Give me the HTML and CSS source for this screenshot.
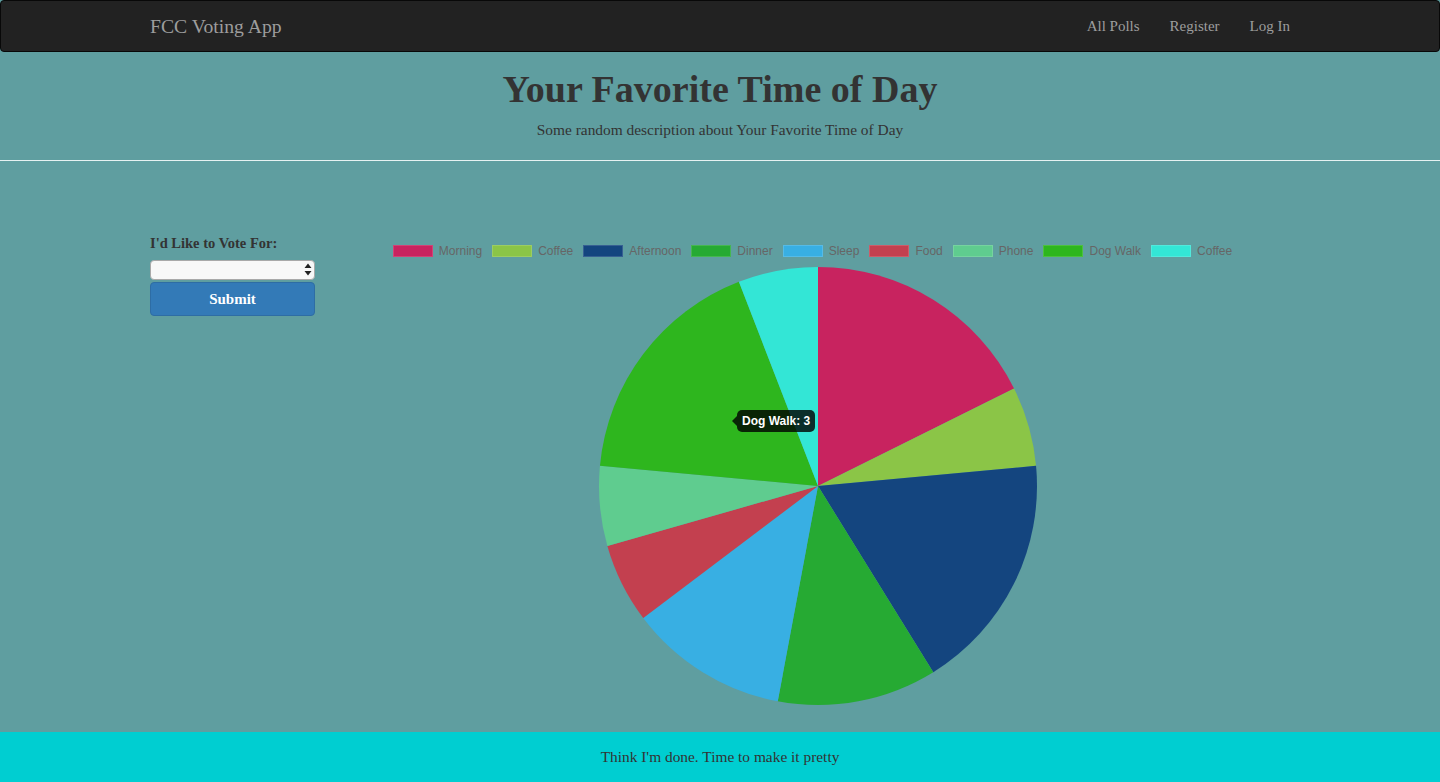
FILE: index.html
```html
<!DOCTYPE html>
<html lang="en">
<head>
<meta charset="utf-8">
<title>FCC Voting App</title>
<link rel="stylesheet" href="styles.css">
</head>
<body>
<nav class="navbar">
  <div class="container nav-inner">
    <a class="brand" href="#">FCC Voting App</a>
    <ul class="nav-links">
      <li><a href="#">All Polls</a></li>
      <li><a href="#">Register</a></li>
      <li><a href="#">Log In</a></li>
    </ul>
  </div>
</nav>

<header class="poll-header">
  <h1 class="poll-title">Your Favorite Time of Day</h1>
  <p class="poll-desc">Some random description about Your Favorite Time of Day</p>
</header>
<hr class="divider">

<main class="container main">
  <section class="vote-col">
    <label class="vote-label" for="vote">I'd Like to Vote For:</label>
    <div class="select-wrap">
      <select id="vote" class="vote-select">
        <option></option>
      </select>
      <span class="select-arrows">
        <svg width="8" height="13" viewBox="0 0 8 13"><path d="M4 0.5 L7.5 5 H0.5 Z M4 12.5 L7.5 8 H0.5 Z" fill="#222"/></svg>
      </span>
    </div>
    <button class="submit-btn" type="button">Submit</button>
  </section>

  <section class="chart-col">
    <ul class="legend">
      <li><span class="swatch sw-morning"></span>Morning</li>
      <li><span class="swatch sw-coffee"></span>Coffee</li>
      <li><span class="swatch sw-afternoon"></span>Afternoon</li>
      <li><span class="swatch sw-dinner"></span>Dinner</li>
      <li><span class="swatch sw-sleep"></span>Sleep</li>
      <li><span class="swatch sw-food"></span>Food</li>
      <li><span class="swatch sw-phone"></span>Phone</li>
      <li><span class="swatch sw-dogwalk"></span>Dog Walk</li>
      <li><span class="swatch sw-coffee2"></span>Coffee</li>
    </ul>
    <div class="chart-area">
      <svg class="pie" width="945" height="440" viewBox="0 0 945 440">
        <path d="M473,220 L473,1 A219,219 0 0 1 669.04,122.39 Z" fill="#c8235f"/>
        <path d="M473,220 L669.04,122.39 A219,219 0 0 1 691.06,199.79 Z" fill="#8bc547"/>
        <path d="M473,220 L691.06,199.79 A219,219 0 0 1 588.29,406.20 Z" fill="#14457f"/>
        <path d="M473,220 L588.29,406.20 A219,219 0 0 1 432.76,435.27 Z" fill="#26aa33"/>
        <path d="M473,220 L432.76,435.27 A219,219 0 0 1 298.23,351.98 Z" fill="#38afe3"/>
        <path d="M473,220 L298.23,351.98 A219,219 0 0 1 262.36,279.93 Z" fill="#c3404f"/>
        <path d="M473,220 L262.36,279.93 A219,219 0 0 1 254.94,199.79 Z" fill="#5fcc8f"/>
        <path d="M473,220 L254.94,199.79 A219,219 0 0 1 393.89,15.79 Z" fill="#2eb61e"/>
        <path d="M473,220 L393.89,15.79 A219,219 0 0 1 473,1 Z" fill="#33e6d6"/>
      </svg>
      <div class="tooltip">Dog Walk: 3</div>
    </div>
  </section>
</main>

<footer class="footer">Think I'm done. Time to make it pretty</footer>
</body>
</html>
```

FILE: styles.css
```css
* { box-sizing: border-box; }

html, body { height: 100%; }

body {
  margin: 0;
  min-height: 782px;
  display: flex;
  flex-direction: column;
  background: #5f9ea0;
  color: #333;
  font-family: "Liberation Serif", "DejaVu Serif", serif;
  font-size: 15px;
  line-height: 20px;
}

.container {
  width: 1170px;
  margin: 0 auto;
  padding: 0 15px;
}

/* Navbar */
.navbar {
  height: 52px;
  background: #222;
  border: 1px solid #080808;
  border-radius: 4px;
}
.nav-inner {
  display: flex;
  align-items: center;
  justify-content: space-between;
  height: 49px;
}
.brand {
  color: #9d9d9d;
  text-decoration: none;
  font-size: 19.7px;
  line-height: 20px;
}
.nav-links {
  list-style: none;
  display: flex;
  margin: 0 -15px 0 0;
  padding: 0;
}
.nav-links a {
  display: block;
  padding: 15px;
  color: #9d9d9d;
  text-decoration: none;
  font-size: 15px;
  line-height: 20px;
}

/* Header */
.poll-header {
  text-align: center;
  padding-top: 17px;
}
.poll-title {
  margin: 0;
  font-size: 38px;
  line-height: 40px;
  font-weight: bold;
  color: #333;
}
.poll-desc {
  margin: 11px 0 0;
  font-size: 15.4px;
  line-height: 20px;
}
.divider {
  margin: 20px 0 0;
  border: 0;
  border-top: 1px solid #e6f2f2;
  height: 0;
}

/* Main */
.main {
  flex: 1;
  display: flex;
  padding: 72px 0 0;
}
.vote-col {
  width: 195px;
  padding: 0 15px;
  display: flex;
  flex-direction: column;
}
.vote-label {
  font-weight: bold;
  font-size: 14.5px;
  line-height: 20px;
  margin-bottom: 6px;
}
.select-wrap {
  position: relative;
  height: 20px;
}
.vote-select {
  appearance: none;
  -webkit-appearance: none;
  width: 165px;
  height: 20px;
  margin: 0;
  border: 1px solid #a9a9a9;
  border-radius: 4px;
  background: #f8f8f8;
  font-family: inherit;
}
.select-arrows {
  position: absolute;
  right: 3px;
  top: 4px;
  line-height: 0;
}
.submit-btn {
  margin-top: 3px;
  width: 165px;
  height: 34px;
  background: #337ab7;
  border: 1px solid #2e6da4;
  border-radius: 4px;
  color: #fff;
  font-family: inherit;
  font-weight: bold;
  font-size: 15px;
}

.chart-col {
  width: 975px;
  padding: 0 15px;
}
.legend {
  list-style: none;
  margin: 12px 0 0;
  padding: 0 10px 0 0;
  display: flex;
  justify-content: center;
  gap: 10px;
  font-family: "Liberation Sans", Arial, sans-serif;
  font-size: 12px;
  line-height: 12px;
  color: #666;
}
.legend li {
  display: flex;
  align-items: center;
}
.swatch {
  width: 40px;
  height: 12px;
  margin-right: 6px;
  border: 1px solid rgba(255,255,255,0.15);
}
.sw-morning { background: #c8235f; }
.sw-coffee { background: #8bc547; }
.sw-afternoon { background: #14457f; }
.sw-dinner { background: #26aa33; }
.sw-sleep { background: #38afe3; }
.sw-food { background: #c3404f; }
.sw-phone { background: #5fcc8f; }
.sw-dogwalk { background: #2eb61e; }
.sw-coffee2 { background: #33e6d6; }

.chart-area {
  position: relative;
  margin-top: 9px;
  height: 440px;
}
.pie { display: block; }

.tooltip {
  position: absolute;
  left: 392px;
  top: 144px;
  height: 22px;
  padding: 0 5px;
  background: rgba(0,0,0,0.8);
  color: #fff;
  border-radius: 5px;
  font-family: "Liberation Sans", Arial, sans-serif;
  font-weight: bold;
  font-size: 12px;
  line-height: 22px;
  white-space: nowrap;
}
.tooltip::before {
  content: "";
  position: absolute;
  left: -5px;
  top: 6px;
  border-top: 5px solid transparent;
  border-bottom: 5px solid transparent;
  border-right: 5px solid rgba(0,0,0,0.8);
}

/* Footer */
.footer {
  height: 50px;
  background: #00ced1;
  text-align: center;
  line-height: 50px;
  font-size: 15.4px;
  color: #333;
}
```
